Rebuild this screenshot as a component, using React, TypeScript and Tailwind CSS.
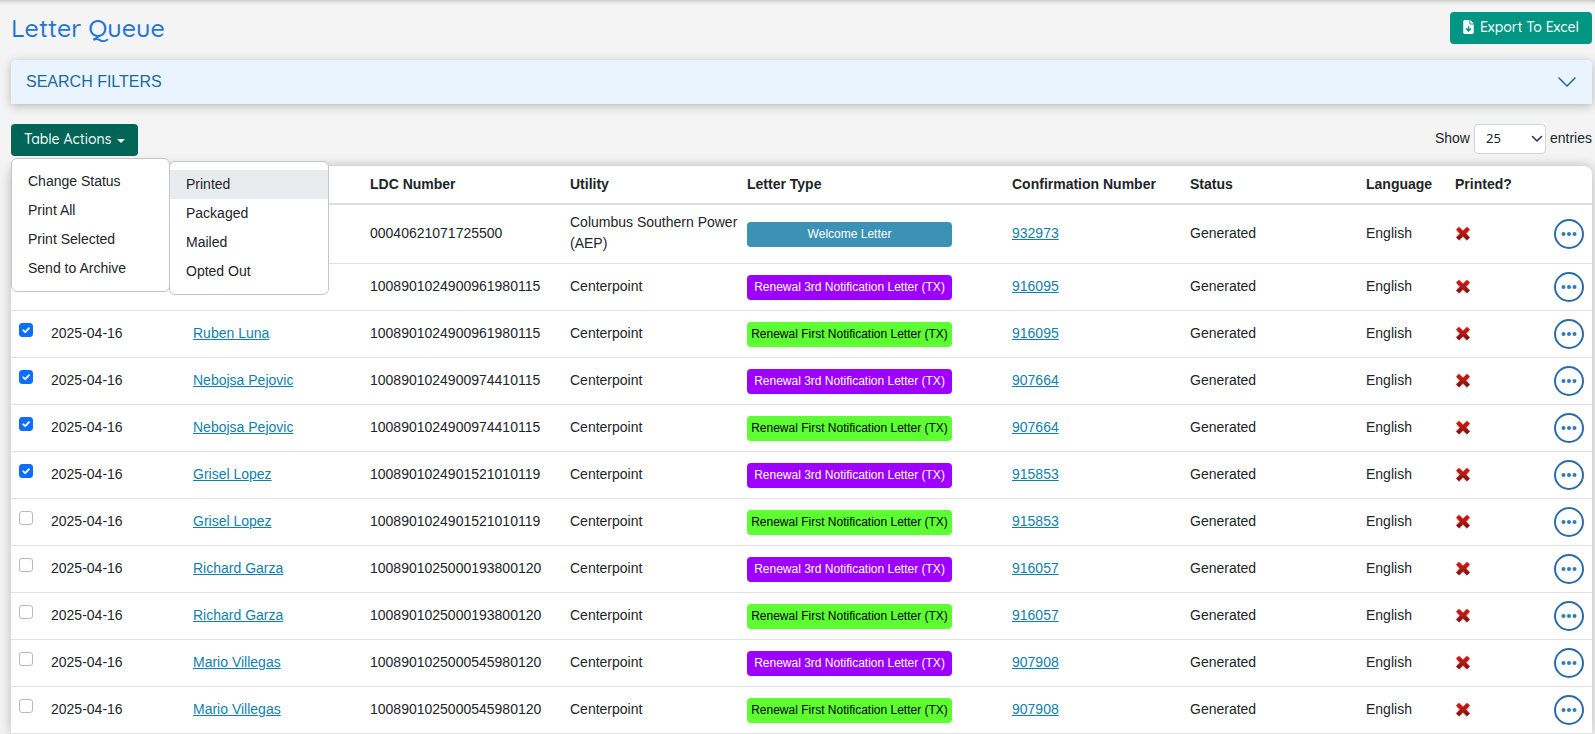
import React from "react";

type LetterKind = "welcome" | "third" | "first";

interface Letter {
  date?: string;
  name?: string;
  ldc: string;
  utility: string;
  kind: LetterKind;
  confirmation: string;
  checked: boolean;
}

const badges: Record<LetterKind, { label: string; style: string }> = {
  welcome: { label: "Welcome Letter", style: "bg-[#3b92b5] text-white" },
  third: { label: "Renewal 3rd Notification Letter (TX)", style: "bg-[#9d00ff] text-white" },
  first: { label: "Renewal First Notification Letter (TX)", style: "bg-[#5dff33] text-black" },
};

const day = "2025-04-16";

const letters: Letter[] = [
  { ldc: "00040621071725500", utility: "Columbus Southern Power (AEP)", kind: "welcome", confirmation: "932973", checked: true },
  { ldc: "1008901024900961980115", utility: "Centerpoint", kind: "third", confirmation: "916095", checked: true },
  { date: day, name: "Ruben Luna", ldc: "1008901024900961980115", utility: "Centerpoint", kind: "first", confirmation: "916095", checked: true },
  { date: day, name: "Nebojsa Pejovic", ldc: "1008901024900974410115", utility: "Centerpoint", kind: "third", confirmation: "907664", checked: true },
  { date: day, name: "Nebojsa Pejovic", ldc: "1008901024900974410115", utility: "Centerpoint", kind: "first", confirmation: "907664", checked: true },
  { date: day, name: "Grisel Lopez", ldc: "1008901024901521010119", utility: "Centerpoint", kind: "third", confirmation: "915853", checked: true },
  { date: day, name: "Grisel Lopez", ldc: "1008901024901521010119", utility: "Centerpoint", kind: "first", confirmation: "915853", checked: false },
  { date: day, name: "Richard Garza", ldc: "1008901025000193800120", utility: "Centerpoint", kind: "third", confirmation: "916057", checked: false },
  { date: day, name: "Richard Garza", ldc: "1008901025000193800120", utility: "Centerpoint", kind: "first", confirmation: "916057", checked: false },
  { date: day, name: "Mario Villegas", ldc: "1008901025000545980120", utility: "Centerpoint", kind: "third", confirmation: "907908", checked: false },
  { date: day, name: "Mario Villegas", ldc: "1008901025000545980120", utility: "Centerpoint", kind: "first", confirmation: "907908", checked: false },
];

const columns = [
  { title: "", width: "w-[36px]" },
  { title: "", width: "w-[142px]" },
  { title: "", width: "w-[177px]" },
  { title: "LDC Number", width: "w-[200px]" },
  { title: "Utility", width: "w-[177px]" },
  { title: "Letter Type", width: "w-[265px]" },
  { title: "Confirmation Number", width: "w-[178px]" },
  { title: "Status", width: "w-[176px]" },
  { title: "Language", width: "w-[89px]" },
  { title: "Printed?", width: "w-[99px]" },
  { title: "", width: "w-[42px]" },
];

const cell = "border-b border-[#dee2e6] px-1 py-2 align-middle";
const textCell = "border-b border-[#dee2e6] px-1 pt-[7px] pb-[9px] align-middle";
const link = "text-[#0f7fae] underline";
const greenButton =
  "flex h-8 items-center rounded-[4px] px-[13px] pb-[2px] font-[Quicksand,Lato,sans-serif] text-sm font-medium text-white";

function FileDownIcon() {
  return (
    <svg viewBox="0 0 12 16" className="h-[14px] w-[11px]" aria-hidden="true">
      <path fill="#fff" fillRule="evenodd" d="M1.7 0H7v3.6c0 .9.6 1.4 1.4 1.4H12v9.3c0 1-.7 1.7-1.7 1.7H1.7C.7 16 0 15.300 0 14.300V1.700C0 .7.7 0 1.700 0ZM5.200 7v3.200L3.800 9l-1.200 1.200L6 13.600l3.400-3.400L8.200 9 6.800 10.200V7Z" />
      <path fill="#fff" d="M8 0l4 4H8.600C8.200 4 8 3.800 8 3.400Z" />
    </svg>
  );
}

function CrossIcon() {
  return (
    <svg viewBox="0 0 16 16" className="block h-4 w-4" role="img" aria-label="No">
      <defs>
        <linearGradient id="cross" x1="0" y1="1" x2="0" y2="15" gradientUnits="userSpaceOnUse">
          <stop offset="0" stopColor="#dc120b" />
          <stop offset="0.500" stopColor="#b01a16" />
          <stop offset="1" stopColor="#640606" />
        </linearGradient>
      </defs>
      <path d="M3 3.500 13 13.500M13 3.500 3 13.500" stroke="#000" strokeWidth="4.600" opacity="0.160" />
      <path d="M4 .900 8 4.700 12 .900l2.800 2.700L11.100 7.500l3.700 3.900-2.800 2.700L8 10.300 4 14.100 1.200 11.400 4.900 7.500 1.200 3.600Z" fill="url(#cross)" stroke="url(#cross)" strokeWidth="0.400" strokeLinejoin="round" />
    </svg>
  );
}

function RowCheckbox({ checked, label }: { checked: boolean; label: string }) {
  return (
    <span className="grid h-[14px] w-[14px]">
      <input
        type="checkbox"
        defaultChecked={checked}
        aria-label={label}
        className="peer col-start-1 row-start-1 h-[14px] w-[14px] appearance-none rounded-[3px] border border-[#b9b9b9] bg-white checked:border-[#0d6efd] checked:bg-[#0d6efd]"
      />
      <svg
        viewBox="0 0 14 14"
        className="pointer-events-none col-start-1 row-start-1 hidden h-[14px] w-[14px] peer-checked:block"
        aria-hidden="true"
      >
        <path d="M4.300 7.300 6.300 9.200 10 5.200" fill="none" stroke="#fff" strokeWidth="1.800" strokeLinecap="round" strokeLinejoin="round" />
      </svg>
    </span>
  );
}

function Menu({ items, active }: { items: string[]; active?: string }) {
  return (
    <ul className="rounded-md border border-[#c4c5c6] bg-white py-2">
      {items.map((item) => (
        <li key={item}>
          <button
            type="button"
            className={`block w-full px-4 py-1 text-left text-sm leading-[21px] ${item === active ? "bg-[#e9ecef]" : ""}`}
          >
            {item}
          </button>
        </li>
      ))}
    </ul>
  );
}

export default function App() {
  return (
    <div className="min-h-screen bg-[#f4f4f4] font-['Liberation_Sans',Arial,sans-serif] text-sm leading-[21px] text-[#212529] shadow-[inset_0_5px_4px_-4px_rgba(0,0,0,0.25)]">
      <main className="pr-[3px] pl-[11px]">
        <header className="flex items-center justify-between py-3">
          <h1 className="font-[Quicksand,Lato,sans-serif] text-[25px] leading-8 font-medium text-[#1f76d2]">Letter Queue</h1>
          <button type="button" className={`${greenButton} gap-[6px] bg-[#009683]`}>
            <FileDownIcon />
            Export To Excel
          </button>
        </header>

        <button
          type="button"
          aria-expanded="false"
          className="mt-1 flex h-11 w-full items-center justify-between rounded-t-[4px] bg-[#e9f4ff] pr-4 pl-[15px] text-base text-[#176b9e] shadow-[0_2px_10px_rgba(0,0,0,0.25)]"
        >
          SEARCH FILTERS
          <svg viewBox="0 0 18 10" className="h-[10px] w-[18px]" aria-hidden="true">
            <path d="M1 1l8 8 8-8" fill="none" stroke="#176b9e" strokeWidth="1.500" strokeLinecap="round" />
          </svg>
        </button>

        <div className="mt-5 flex items-start justify-between">
          <div className="relative">
            <button type="button" aria-haspopup="menu" aria-expanded="true" className={`${greenButton} gap-[6px] bg-[#006457]`}>
              Table Actions
              <svg viewBox="0 0 8 4" className="mt-1 h-1 w-2" aria-hidden="true">
                <path d="M0 0h8L4 4Z" fill="#fff" />
              </svg>
            </button>
            <div className="absolute top-[34px] left-0 z-10 w-[159px]">
              <Menu items={["Change Status", "Print All", "Print Selected", "Send to Archive"]} />
              <div className="absolute top-[3px] left-[158px] w-[160px]">
                <Menu items={["Printed", "Packaged", "Mailed", "Opted Out"]} active="Printed" />
              </div>
            </div>
          </div>

          <div className="flex items-start gap-1">
            <label htmlFor="page-size" className="pt-1">
              Show
            </label>
            <span className="grid items-center">
              <select
                id="page-size"
                defaultValue="25"
                className="col-start-1 row-start-1 h-[30px] w-[72px] appearance-none rounded-[4px] border border-[#ced4da] bg-white px-[11px] pb-[2px] font-['Noto_Sans',sans-serif] text-[13px]"
              >
                <option value="25">25</option>
              </select>
              <svg viewBox="0 0 12 8" className="pointer-events-none col-start-1 row-start-1 mr-[3px] h-2 w-3 justify-self-end" aria-hidden="true">
                <path d="M1.500 1.500 6 6l4.500-4.500" fill="none" stroke="#343a40" strokeWidth="1.600" strokeLinecap="round" strokeLinejoin="round" />
              </svg>
            </span>
            <span className="pt-1">entries</span>
          </div>
        </div>

        <div className="mt-[10px] rounded-t-lg bg-white shadow-[0_0_12px_rgba(0,0,0,0.25)]">
          <table className="w-full table-fixed border-separate border-spacing-0">
            <thead>
              <tr>
                {columns.map((column, index) => (
                  <th
                    key={index}
                    scope="col"
                    className={`h-[39px] border-b-2 border-[#dcdddd] px-1 text-left font-bold whitespace-nowrap ${column.width}`}
                  >
                    {column.title}
                  </th>
                ))}
              </tr>
            </thead>
            <tbody>
              {letters.map((letter, index) => (
                <tr key={index}>
                  <td className="border-b border-[#dee2e6] pt-3 pl-2 align-top">
                    <RowCheckbox checked={letter.checked} label={`Select letter ${index + 1}`} />
                  </td>
                  <td className={textCell}>{letter.date}</td>
                  <td className={textCell}>
                    {letter.name && (
                      <a href="#customer" className={link}>
                        {letter.name}
                      </a>
                    )}
                  </td>
                  <td className={textCell}>{letter.ldc}</td>
                  <td className={textCell}>{letter.utility}</td>
                  <td className={cell}>
                    <span className={`block h-[25px] w-[205px] rounded-[4px] text-center text-xs leading-6 whitespace-nowrap ${badges[letter.kind].style}`}>
                      {badges[letter.kind].label}
                    </span>
                  </td>
                  <td className={textCell}>
                    <a href="#confirmation" className={link}>
                      {letter.confirmation}
                    </a>
                  </td>
                  <td className={textCell}>Generated</td>
                  <td className={textCell}>English</td>
                  <td className={cell}>
                    <CrossIcon />
                  </td>
                  <td className={cell}>
                    <button type="button" aria-label="Row actions" className="block h-[30px] w-[30px]">
                      <svg viewBox="0 0 30 30" className="h-[30px] w-[30px]" aria-hidden="true">
                        <circle cx="15" cy="15" r="14" fill="none" stroke="#2b6ca8" strokeWidth="2" />
                        <circle cx="9.500" cy="15" r="2" fill="#2f7abf" />
                        <circle cx="15" cy="15" r="2" fill="#2f7abf" />
                        <circle cx="20.500" cy="15" r="2" fill="#2f7abf" />
                      </svg>
                    </button>
                  </td>
                </tr>
              ))}
            </tbody>
          </table>
        </div>
      </main>
    </div>
  );
}
